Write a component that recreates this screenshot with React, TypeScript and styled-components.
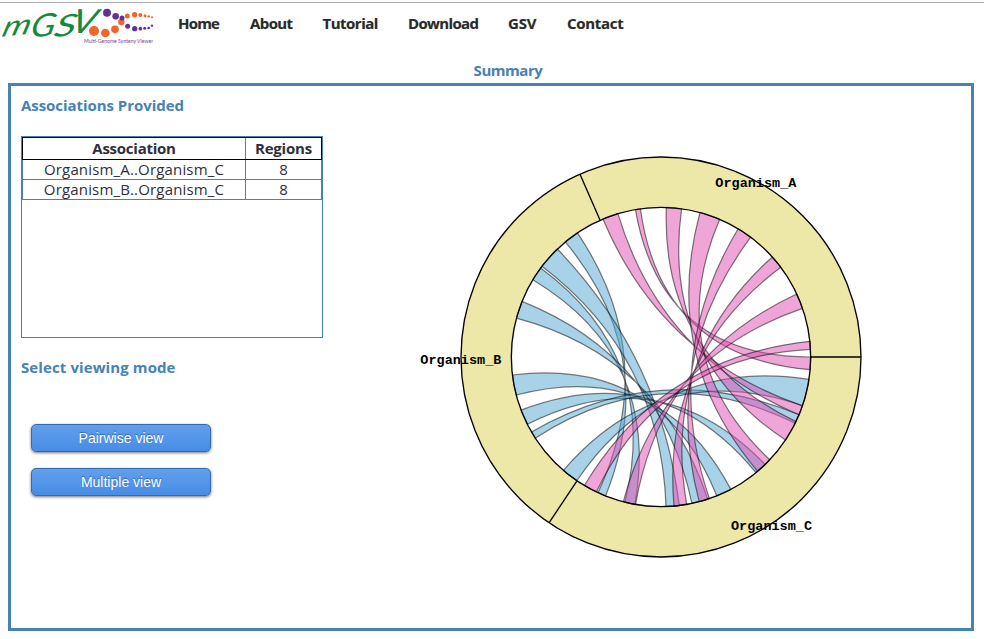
import React from 'react';
import styled, { createGlobalStyle } from 'styled-components';

const GlobalStyle = createGlobalStyle`
  *, *::before, *::after { box-sizing: border-box; }
  body { margin: 0; background: #fff; font-family: 'Open Sans', 'Noto Sans', sans-serif; font-size: 15px; }
`;

const Page = styled.div`
  width: 984px;
  height: 639px;
  padding-top: 2px;
  display: flex;
  flex-direction: column;
`;

const Header = styled.header`
  height: 56px;
  border-top: 1px solid #adadad;
  display: flex;
  flex: none;
`;

const Logo = styled.svg`
  width: 160px;
  height: 46px;
  flex: none;
  overflow: visible;
`;

const Nav = styled.nav`
  display: flex;
  padding: 9px 0 0 18px;
`;

const NavLink = styled.a<{ $width: number; $spacing: number }>`
  width: ${(p) => p.$width}px;
  flex: none;
  line-height: 22px;
  font-weight: 700;
  font-size: 15px;
  letter-spacing: ${(p) => p.$spacing}px;
  color: #2b2b2b;
  text-shadow: 0 0 1px rgba(0, 0, 0, 0.25);
  white-space: nowrap;
`;

const PageTitle = styled.h1`
  margin: 0;
  height: 25px;
  padding-left: 32px;
  flex: none;
  line-height: 25px;
  font-size: 15px;
  font-weight: 700;
  letter-spacing: -0.45px;
  text-align: center;
  color: #4682b4;
`;

const Panel = styled.main`
  margin: 0 10px 0 8px;
  height: 548px;
  border: 3px solid #4682b4;
  display: flex;
  flex: none;
`;

const Sidebar = styled.section`
  width: 399px;
  padding: 8px 0 0 10px;
  flex: none;
`;

const SectionTitle = styled.h2<{ $spacing: number }>`
  margin: 0;
  height: 22px;
  line-height: 22px;
  font-size: 15px;
  font-weight: 700;
  letter-spacing: ${(p) => p.$spacing}px;
  color: #4682b4;
`;

const TableBox = styled.div`
  width: 302px;
  height: 202px;
  margin: 20px 0 18px;
  border: 1px solid #4682b4;
`;

const Row = styled.div<{ $head?: boolean }>`
  display: grid;
  grid-template-columns: 222px 1fr;
  height: ${(p) => (p.$head ? 23 : 20)}px;
  border: 1px solid ${(p) => (p.$head ? '#000' : '#4682b4')};
  border-top-width: ${(p) => (p.$head ? 1 : 0)}px;
  font-weight: ${(p) => (p.$head ? 700 : 400)};
  color: #2f2f3b;
`;

const Cell = styled.div<{ $head?: boolean; $spacing?: number }>`
  line-height: ${(p) => (p.$head ? 21 : 18)}px;
  height: 100%;
  text-align: center;
  letter-spacing: ${(p) => p.$spacing ?? 0}px;
  & + & { border-left: 1px solid ${(p) => (p.$head ? '#000' : '#4682b4')}; }
`;

const Actions = styled.div`
  display: flex;
  flex-direction: column;
  gap: 16px;
  padding: 46px 0 0 10px;
`;

const Button = styled.button`
  width: 180px;
  height: 28px;
  padding: 0;
  border: 1px solid #2f6cb3;
  border-radius: 5px;
  background: linear-gradient(#629fec, #478de6);
  box-shadow: 0 1px 3px rgba(0, 0, 0, 0.55);
  color: #fff;
  font: 14px 'Liberation Sans', Arial, sans-serif;
  line-height: 26px;
  text-shadow: 0 -1px 1px rgba(20, 60, 130, 0.5);
`;

const Chart = styled.svg`
  width: 460px;
  height: 430px;
  margin-top: 54px;
  flex: none;
`;

const ChartLabel = styled.text`
  font: 700 40.5px 'Liberation Mono', 'Courier New', monospace;
`;

type Point = [number, number];
/* start, end on the first organism; start, end on the second; whether the band twists */
type Link = [Point, Point, Point, Point, boolean];

const CX = 753;
const CY = 651;
const INNER = 449;

const linksBC: Link[] = [
  [[465, 305], [504, 281], [588, 1065], [565, 1056], true],
  [[397, 380], [443, 328], [808, 1097], [768, 1099], false],
  [[370, 420], [393, 385], [675, 1092], [645, 1086], true],
  [[321, 535], [338, 485], [893, 1077], [845, 1087], true],
  [[319, 765], [307, 705], [962, 1047], [920, 1067], true],
  [[354, 852], [334, 810], [1066, 974], [1038, 998], true],
  [[378, 893], [366, 875], [1167, 824], [1156, 850], false],
  [[502, 1020], [461, 990], [1196, 718], [1177, 797], true],
];

const linksAC: Link[] = [
  [[579, 238], [624, 222], [1176, 797], [1167, 824], true],
  [[676, 207], [691, 205], [1202, 651], [1200, 689], true],
  [[769, 202], [815, 205], [1158, 845], [1126, 900], true],
  [[870, 217], [929, 238], [1080, 960], [1042, 993], false],
  [[984, 267], [1022, 292], [898, 1075], [867, 1083], true],
  [[1088, 350], [1112, 382], [830, 1093], [792, 1098], true],
  [[1160, 462], [1178, 505], [677, 1092], [640, 1085], true],
  [[1200, 604], [1202, 628], [562, 1050], [524, 1035], false],
];

const onCircle = ([x, y]: Point): Point => {
  const a = Math.atan2(y - CY, x - CX);
  return [CX + INNER * Math.cos(a), CY + INNER * Math.sin(a)];
};

const linkPath = ([p0, p1, p2, p3, twisted]: Link) => {
  const a = onCircle(p0);
  const b = onCircle(p1);
  const c = onCircle(twisted ? p3 : p2);
  const d = onCircle(twisted ? p2 : p3);
  const arc = `A${INNER} ${INNER} 0 0`;
  return `M${a}${arc} 1 ${b}Q${CX} ${CY} ${c}${arc} ${twisted ? 0 : 1} ${d}Q${CX} ${CY} ${a}Z`;
};

const Bands = ({ links, color }: { links: Link[]; color: string }) => (
  <g fill={color} fillOpacity={0.5} stroke="#000" strokeOpacity={0.5} strokeWidth={3.6}>
    {links.map((link, i) => <path key={i} d={linkPath(link)} />)}
  </g>
);

const dots: [number, number, number, string][] = [
  [321, 38, 12, '#663092'], [347, 49, 10, '#663092'], [282, 93, 15, '#f1642a'],
  [316, 99, 13, '#f1642a'], [345, 88, 11.5, '#f1642a'], [364, 66, 9.5, '#f1642a'],
  [366, 54, 7.5, '#663092'], [382, 48, 7.5, '#f1642a'], [404, 44, 8, '#f1642a'], [421, 45, 6, '#f1642a'],
  [435, 47, 4.5, '#f1642a'], [446, 49, 3.5, '#f1642a'], [456, 52, 3, '#f1642a'],
  [383, 79, 7.5, '#663092'], [404, 86, 8, '#663092'], [421, 86, 5.5, '#663092'],
  [434, 85, 4.5, '#663092'], [446, 84, 4, '#663092'], [456, 77, 3.5, '#663092'],
];

const LogoMark = () => (
  <Logo viewBox="0 9 480 138" role="img" aria-label="mGSV">
    <g fill="#158a3c" fontFamily="Lato, sans-serif" fontStyle="italic" fontWeight={400}>
      <text transform="translate(2 110) rotate(-6) skewX(-22) scale(1.28 1)" fontSize="84">m</text>
      <text transform="translate(88 112) rotate(-4) skewX(-16) scale(1.15 1)" fontSize="94">G</text>
      <text transform="translate(158 112) rotate(-6) skewX(-20) scale(1.45 1)" fontSize="88">S</text>
      <text transform="translate(208 98) skewX(-16) scale(1.15 1)" fontSize="100">V</text>
    </g>
    {dots.map(([x, y, r, fill]) => <circle key={`${x}-${y}`} cx={x} cy={y} r={r} fill={fill} />)}
    <text x="252" y="130" textLength="207" lengthAdjust="spacingAndGlyphs" fontFamily="Lato, sans-serif" fontSize="16" fill="#74479c">
      Multi-Genome Synteny Viewer
    </text>
  </Logo>
);

const organismLabels: [string, number, number][] = [
  ['Organism_A', 916, 140], ['Organism_B', 31, 671], ['Organism_C', 963, 1169],
];

const SyntenyChart = () => (
  <Chart viewBox="0 0 1380 1290">
    <circle cx={CX} cy={CY} r={524.5} fill="none" stroke="#ede7a8" strokeWidth={151} />
    <Bands links={linksBC} color="#52a5d2" />
    <Bands links={linksAC} color="#e04bb0" />
    <g fill="none" stroke="#000" strokeWidth={4}>
      <circle cx={CX} cy={CY} r={600} />
      <circle cx={CX} cy={CY} r={INNER} />
      <path d="M1202 651H1353M570 240L510 103M500 1024L418 1147" />
    </g>
    {organismLabels.map(([name, x, y]) => (
      <ChartLabel key={name} x={x} y={y}>{name}</ChartLabel>
    ))}
  </Chart>
);

const navItems: [string, number, number][] = [
  ['Home', 72, -0.8], ['About', 72.5, -0.6], ['Tutorial', 85.5, -0.5],
  ['Download', 100, -0.65], ['GSV', 59, -0.2], ['Contact', 70, -0.3],
];

const associations = [
  { name: 'Organism_A..Organism_C', regions: 8 },
  { name: 'Organism_B..Organism_C', regions: 8 },
];

export default function App() {
  return (
    <Page>
      <GlobalStyle />
      <Header>
        <LogoMark />
        <Nav>
          {navItems.map(([label, width, spacing]) => (
            <NavLink key={label} $width={width} $spacing={spacing}>{label}</NavLink>
          ))}
        </Nav>
      </Header>
      <PageTitle>Summary</PageTitle>
      <Panel>
        <Sidebar>
          <SectionTitle $spacing={-0.05}>Associations Provided</SectionTitle>
          <TableBox>
            <Row $head>
              <Cell $head $spacing={-0.25}>Association</Cell>
              <Cell $head $spacing={-0.2}>Regions</Cell>
            </Row>
            {associations.map((a) => (
              <Row key={a.name}>
                <Cell $spacing={0.16}>{a.name}</Cell>
                <Cell>{a.regions}</Cell>
              </Row>
            ))}
          </TableBox>
          <SectionTitle $spacing={0.1}>Select viewing mode</SectionTitle>
          <Actions>
            <Button>Pairwise view</Button>
            <Button>Multiple view</Button>
          </Actions>
        </Sidebar>
        <SyntenyChart />
      </Panel>
    </Page>
  );
}
